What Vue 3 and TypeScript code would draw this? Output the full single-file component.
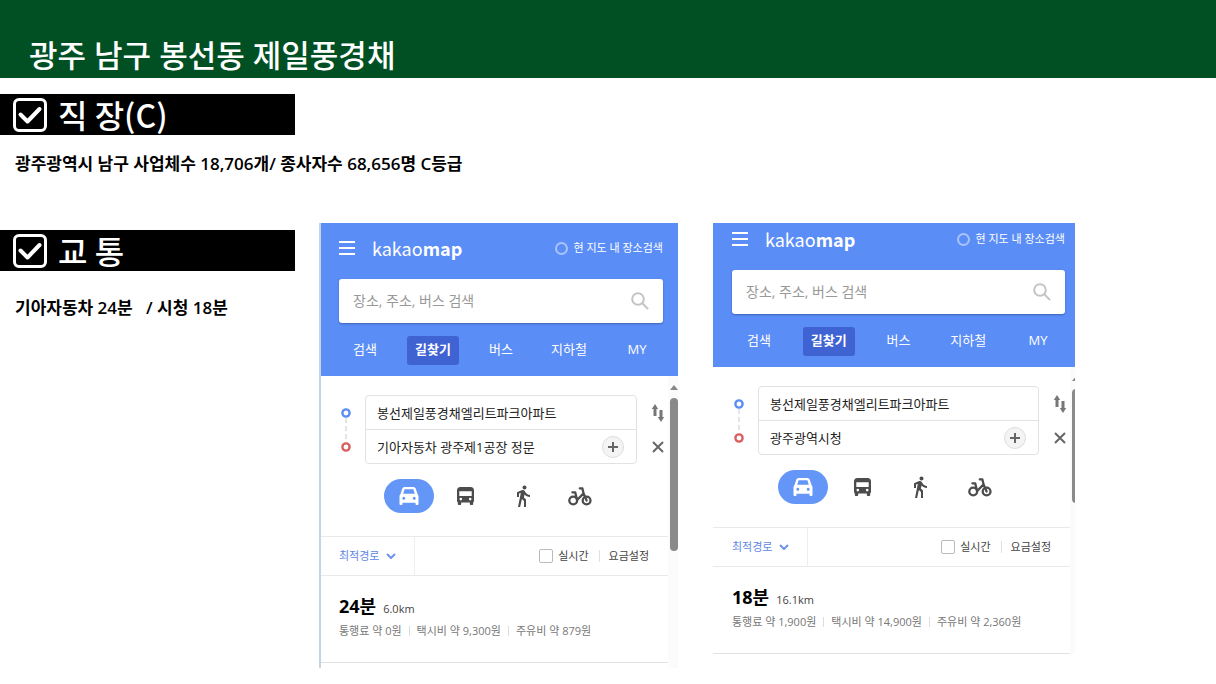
<script setup lang="ts">
import { ref } from 'vue'

interface Route {
  id: string
  from: string
  to: string
  minutes: string
  distance: string
  costs: string[]
}

const workplaceNote = '광주광역시 남구 사업체수 18,706개/ 종사자수 68,656명 C등급'
const trafficNote = '기아자동차 24분   / 시청 18분'

const routes: Route[] = [
  {
    id: 'kia',
    from: '봉선제일풍경채엘리트파크아파트',
    to: '기아자동차 광주제1공장 정문',
    minutes: '24분',
    distance: '6.0km',
    costs: ['통행료 약 0원', '택시비 약 9,300원', '주유비 약 879원'],
  },
  {
    id: 'cityhall',
    from: '봉선제일풍경채엘리트파크아파트',
    to: '광주광역시청',
    minutes: '18분',
    distance: '16.1km',
    costs: ['통행료 약 1,900원', '택시비 약 14,900원', '주유비 약 2,360원'],
  },
]

const tabs = ['검색', '길찾기', '버스', '지하철', 'MY']
const activeTab = ref<Record<string, string>>({ kia: '길찾기', cityhall: '길찾기' })

const modes = [
  { key: 'car', label: '자동차' },
  { key: 'bus', label: '대중교통' },
  { key: 'walk', label: '도보' },
  { key: 'bike', label: '자전거' },
]
const activeMode = ref<Record<string, string>>({ kia: 'car', cityhall: 'car' })
</script>

<template>
  <div class="slide">
    <header class="title-bar">
      <h1>광주 남구 봉선동 제일풍경채</h1>
    </header>

    <main>
      <section class="workplace">
        <h2 class="banner">
          <svg class="tick" viewBox="0 0 34 34" aria-hidden="true">
            <rect x="1.5" y="1.5" width="31" height="31" rx="4.5" />
            <path d="M7.500 16.500l7 7L26.500 11" />
          </svg>
          <span>직 장(C)</span>
        </h2>
        <p class="note">{{ workplaceNote }}</p>
      </section>

      <div class="board">
        <section class="traffic">
          <h2 class="banner">
            <svg class="tick" viewBox="0 0 34 34" aria-hidden="true">
              <rect x="1.5" y="1.5" width="31" height="31" rx="4.5" />
              <path d="M7.500 16.500l7 7L26.500 11" />
            </svg>
            <span>교 통</span>
          </h2>
          <p class="note">{{ trafficNote }}</p>
        </section>

        <article v-for="route in routes" :key="route.id" class="panel" :class="route.id">
          <div class="head">
            <div class="brand-row">
              <button class="menu" type="button" aria-label="메뉴">
                <svg viewBox="0 0 16 14"><path d="M0 1h16M0 7h16M0 13h16" /></svg>
              </button>
              <a class="brand" href="#">kakao<b>map</b></a>
              <label class="within">
                <input type="checkbox" />
                <span>현 지도 내 장소검색</span>
              </label>
            </div>
            <form class="search" @submit.prevent>
              <input type="text" placeholder="장소, 주소, 버스 검색" aria-label="장소, 주소, 버스 검색" />
              <button type="submit" aria-label="검색">
                <svg viewBox="0 0 18 18"><circle cx="7" cy="7" r="5.8" /><path d="M11.300 11.300l5.800 5.800" /></svg>
              </button>
            </form>
            <nav class="tabs">
              <button
                v-for="tab in tabs"
                :key="tab"
                type="button"
                :class="{ active: activeTab[route.id] === tab }"
                @click="activeTab[route.id] = tab"
              >
                <span>{{ tab }}</span>
              </button>
            </nav>
          </div>

          <div class="body">
            <div class="content">
              <div class="trip">
                <svg class="dots" viewBox="0 0 10 44" aria-hidden="true">
                  <path class="link" d="M5 10v24" />
                  <circle class="start" cx="5" cy="5" r="3.6" />
                  <circle class="end" cx="5" cy="39" r="3.6" />
                </svg>
                <div class="fields">
                  <div class="field">
                    <input type="text" :value="route.from" aria-label="출발지" />
                  </div>
                  <div class="field">
                    <input type="text" :value="route.to" aria-label="도착지" />
                    <button class="add" type="button" aria-label="경유지 추가">
                      <svg viewBox="0 0 10 10"><path d="M5 0v10M0 5h10" /></svg>
                    </button>
                  </div>
                </div>
                <div class="actions">
                  <button type="button" aria-label="출발지 도착지 바꾸기">
                    <svg class="swap" viewBox="0 0 12 18">
                      <path class="line" d="M3 12V3.500M9 6v8.500" />
                      <path class="tip" d="M3 0L6.200 5H-.2zM9 18l-3.200-5h6.400z" />
                    </svg>
                  </button>
                  <button type="button" aria-label="지우기">
                    <svg class="close" viewBox="0 0 12 12"><path d="M1 1l10 10M11 1L1 11" /></svg>
                  </button>
                </div>
              </div>

              <div class="modes">
                <button
                  v-for="mode in modes"
                  :key="mode.key"
                  type="button"
                  :aria-label="mode.label"
                  :class="{ active: activeMode[route.id] === mode.key }"
                  @click="activeMode[route.id] = mode.key"
                >
                  <svg v-if="mode.key === 'car'" class="car" viewBox="0 0 20 18">
                    <path
                      fill-rule="evenodd"
                      d="M5.500 0h9q1.700 0 2.200 1.500L18.500 7q1 1 1 2.300V17q0 1-1 1h-1q-1 0-1-1v-1.300h-13V17q0 1-1 1h-1q-1 0-1-1V9.300Q.5 8 1.500 7L3.300 1.500Q3.800 0 5.500 0zM5.600 2.200L4.200 6.800h11.600l-1.400-4.600zM4.800 9.700a1.500 1.500 0 1 0 0 3 1.500 1.500 0 0 0 0-3zM15.200 9.700a1.500 1.500 0 1 0 0 3 1.500 1.500 0 0 0 0-3z"
                    />
                  </svg>
                  <svg v-else-if="mode.key === 'bus'" class="bus" viewBox="0 0 17 18">
                    <path
                      fill-rule="evenodd"
                      d="M3.500 0h10Q17 0 17 3.500V14q0 .8-.8 1.200V17q0 1-1 1h-1.400q-1 0-1-1v-1.500H4.200V17q0 1-1 1H1.800q-1 0-1-1v-1.800Q0 14.800 0 14V3.500Q0 0 3.500 0zM2.300 4.300V9h12.400V4.300zM3.800 10.800a1.300 1.300 0 1 0 0 2.600 1.300 1.300 0 0 0 0-2.600zM13.200 10.800a1.300 1.300 0 1 0 0 2.600 1.300 1.300 0 0 0 0-2.600z"
                    />
                  </svg>
                  <svg v-else-if="mode.key === 'walk'" class="walk" viewBox="5 1 15 22">
                    <path
                      d="M13.500 5.500c1.100 0 2-.9 2-2s-.9-2-2-2-2 .9-2 2 .9 2 2 2zM9.800 8.900L7 23h2.100l1.800-8 2.100 2v6h2v-7.500l-2.100-2 .6-3C14.800 12 16.800 13 19 13v-2c-1.900 0-3.500-1-4.300-2.400l-1-1.600c-.4-.6-1-1-1.700-1-.3 0-.5.1-.8.1L6 8.300V13h2V9.600l1.800-.7"
                    />
                  </svg>
                  <svg v-else class="bike" viewBox="0 0 24 19">
                    <g class="stroke">
                      <circle cx="5.200" cy="13.500" r="3.900" />
                      <circle cx="18.600" cy="13.500" r="3.900" />
                      <path d="M4.400 5.300h2.800l1.900 7.700 6.500-6.600M11.800 1.400h2.600l1.200 5 3 7.100" />
                    </g>
                  </svg>
                </button>
              </div>

              <div class="filter">
                <label class="sort">
                  <select aria-label="경로 정렬">
                    <option>최적경로</option>
                  </select>
                  <svg viewBox="0 0 10 6"><path d="M1 1l4 4 4-4" /></svg>
                </label>
                <div class="options">
                  <label><input type="checkbox" /><span>실시간</span></label>
                  <i class="bar"></i>
                  <button type="button">요금설정</button>
                </div>
              </div>

              <div class="result">
                <div class="time">
                  <strong>{{ route.minutes }}</strong>
                  <span>{{ route.distance }}</span>
                </div>
                <ul>
                  <li v-for="cost in route.costs" :key="cost">{{ cost }}</li>
                </ul>
              </div>
            </div>
            <div class="rail" aria-hidden="true">
              <div class="up"></div>
              <div class="thumb"></div>
            </div>
          </div>
        </article>
      </div>
    </main>
  </div>
</template>

<style>
body {
  margin: 0;
  background: #fff;
}
</style>

<style scoped>
.slide,
.slide * {
  box-sizing: border-box;
}
.slide {
  --banner: 24.3vw;
  min-height: 100vh;
  overflow: hidden;
  background: #fff;
  color: #000;
  font-family: 'Open Sans', 'Noto Sans CJK KR', sans-serif;
}
button,
input,
select {
  margin: 0;
  padding: 0;
  border: 0;
  background: none;
  color: inherit;
  font: inherit;
}
button {
  cursor: pointer;
}
svg {
  display: block;
}
h1,
h2,
p,
ul {
  margin: 0;
  padding: 0;
}
.title-bar {
  padding: 33px 29px 0;
  height: 78px;
  background: #005023;
}
h1 {
  color: #fff;
  font-size: 31px;
  font-weight: 500;
  line-height: 44px;
}
.workplace {
  padding-top: 16px;
}
.banner {
  display: flex;
  align-items: center;
  gap: 11px;
  width: var(--banner);
  height: 41px;
  padding-left: 13px;
  background: #000;
  color: #fff;
  font-family: 'Noto Sans CJK KR', sans-serif;
  font-size: 32px;
  font-weight: 500;
  line-height: 41px;
  white-space: nowrap;
}
.tick {
  flex: none;
  width: 34px;
  height: 34px;
  fill: none;
  stroke: #fff;
  stroke-width: 3;
  stroke-linecap: round;
  stroke-linejoin: round;
}
.tick path {
  stroke-width: 4;
}
.note {
  padding: 17px 0 0 15px;
  font-size: 17px;
  font-weight: 600;
  line-height: 24px;
  white-space: pre;
}
.board {
  display: grid;
  grid-template-columns: 319fr 359fr 35fr 362fr 141fr;
  align-items: start;
  margin-top: 47px;
}
.traffic {
  padding-top: 7px;
}
.traffic .note {
  padding-top: 25px;
}
.panel {
  --inset: 18px;
  --inset-right: 15px;
  --crop: 9px;
  --rail: 10px;
  --thumb: 153px;
  min-width: 0;
  border-left: 2px solid #c3d5e2;
}
.panel.cityhall {
  --inset: 19px;
  --inset-right: 10px;
  --crop: 0px;
  --rail: 5px;
  --thumb: 114px;
  grid-column: 4;
  border-left: 0;
}
.head {
  padding: var(--crop) var(--inset-right) 11px var(--inset);
  background: #5b8df6;
  color: #fff;
}
.brand-row {
  display: flex;
  align-items: center;
  height: 32px;
}
.menu svg {
  width: 16px;
  height: 14px;
  stroke: #fff;
  stroke-width: 2;
}
.brand {
  margin-left: 17px;
  color: #fff;
  font-family: 'Noto Sans CJK KR', sans-serif;
  font-size: 18px;
  font-weight: 400;
  line-height: 32px;
  text-decoration: none;
}
.brand b {
  font-weight: 700;
}
.within {
  display: flex;
  align-items: center;
  gap: 5px;
  margin-left: auto;
  font-size: 11px;
  line-height: 16px;
  white-space: nowrap;
}
.within input {
  width: 13px;
  height: 13px;
  border: 2px solid #a9c4fb;
  border-radius: 50%;
  appearance: none;
}
.search {
  display: flex;
  align-items: center;
  height: 44px;
  margin-top: 15px;
  padding: 0 14px;
  border-radius: 3px;
  background: #fff;
  box-shadow: 0 1px 2px #3c65b8;
}
.search input {
  flex: 1;
  min-width: 0;
  color: #333;
  font-size: 14px;
  line-height: 20px;
  outline: 0;
}
.search input::placeholder {
  color: #999;
  opacity: 1;
}
.search svg {
  width: 18px;
  height: 18px;
  fill: none;
  stroke: #c4c4c4;
  stroke-width: 2;
}
.tabs {
  display: grid;
  grid-template-columns: repeat(5, 1fr);
  margin: 13px -8px 0;
}
.tabs button {
  justify-self: center;
  height: 29px;
  padding: 0 8px 4px;
  border-radius: 3px;
  font-size: 13px;
  line-height: 24px;
  white-space: nowrap;
}
.tabs .active {
  background: #3f63d2;
  font-weight: 700;
}
.body {
  display: flex;
}
.content {
  flex: 1;
  min-width: 0;
  padding-top: 19px;
}
.trip {
  display: grid;
  grid-template-columns: calc(var(--inset) + 26px) 1fr 31px;
  align-items: center;
}
.dots {
  justify-self: center;
  width: 10px;
  height: 44px;
  margin-left: 6px;
  fill: none;
  stroke-width: 2.4;
}
.dots .link {
  stroke: #c6cbd2;
  stroke-width: 1;
  stroke-dasharray: 5 3;
}
.dots .start {
  stroke: #5b8df6;
}
.dots .end {
  stroke: #d95f5f;
}
.fields {
  min-width: 0;
  border: 1px solid #e2e2e2;
  border-radius: 4px;
}
.field {
  display: flex;
  align-items: center;
  height: 33px;
  padding: 0 12px 0 11px;
}
.field + .field {
  height: 34px;
  border-top: 1px solid #e2e2e2;
}
.field input {
  flex: 1;
  min-width: 0;
  color: #222;
  font-size: 13px;
  line-height: 20px;
  outline: 0;
}
.add {
  display: grid;
  place-items: center;
  width: 22px;
  height: 22px;
  border: 1px solid #dedede;
  border-radius: 50%;
  background: #f4f4f4;
}
.add svg {
  width: 10px;
  height: 10px;
  stroke: #666;
  stroke-width: 2;
}
.actions {
  display: grid;
  grid-template-rows: 34px 34px;
  padding-left: 11px;
}
.actions button {
  display: grid;
  place-items: center;
}
.swap {
  width: 12px;
  height: 18px;
  overflow: visible;
}
.swap .line {
  stroke: #777;
  stroke-width: 3;
}
.swap .tip {
  fill: #777;
}
.close {
  width: 12px;
  height: 12px;
  stroke: #666;
  stroke-width: 2;
}
.modes {
  display: grid;
  grid-template-columns: repeat(4, 1fr);
  width: 66%;
  margin: 15px auto 23px;
}
.modes button {
  display: grid;
  place-items: center;
  justify-self: center;
  width: 50px;
  height: 34px;
  border-radius: 17px;
}
.modes .active {
  background: #6396f7;
}
.modes svg {
  fill: #4c4c4c;
}
.modes .active svg {
  fill: #fff;
}
.car {
  width: 20px;
  height: 18px;
}
.bus {
  width: 17px;
  height: 18px;
}
.walk {
  width: 15px;
  height: 22px;
}
.bike {
  width: 24px;
  height: 19px;
}
.bike .stroke {
  fill: none;
  stroke: #4c4c4c;
  stroke-width: 2.3;
  stroke-linecap: round;
  stroke-linejoin: round;
}
.filter {
  display: flex;
  height: 40px;
  border-top: 1px solid #e9e9e9;
  border-bottom: 1px solid #e9e9e9;
  color: #444;
  font-size: 11px;
  line-height: 16px;
}
.sort {
  display: flex;
  align-items: center;
  gap: 6px;
  padding: 0 18px 0 var(--inset);
  border-right: 1px solid #eee;
  color: #5e86e6;
}
.sort select {
  appearance: none;
  outline: 0;
}
.sort svg {
  width: 10px;
  height: 6px;
  fill: none;
  stroke: #6f93ea;
  stroke-width: 2;
}
.options {
  display: flex;
  align-items: center;
  margin-left: auto;
  padding-right: 19px;
}
.options label {
  display: flex;
  align-items: center;
  gap: 5px;
}
.options input {
  width: 14px;
  height: 14px;
  border: 1px solid #bbb;
  border-radius: 2px;
  background: #fff;
  appearance: none;
}
.bar {
  width: 1px;
  height: 12px;
  margin: 0 9px 0 10px;
  background: #e0e0e0;
}
.result {
  padding: 17px 0 20px var(--inset);
  border-bottom: 1px solid #e2e2e2;
}
.time {
  display: flex;
  align-items: baseline;
  gap: 7px;
  height: 26px;
  line-height: 26px;
}
.time strong {
  font-size: 18px;
  font-weight: 700;
}
.time span {
  color: #444;
  font-size: 11px;
}
ul {
  display: flex;
  height: 23px;
  color: #777;
  font-size: 11px;
  line-height: 23px;
  list-style: none;
  white-space: nowrap;
}
li {
  display: flex;
  align-items: center;
}
li + li::before {
  content: '';
  width: 1px;
  height: 10px;
  margin: 0 7px;
  background: #ddd;
}
.rail {
  flex: none;
  width: var(--rail);
  padding: 9px 0 0 2px;
  overflow: hidden;
  background: #fbfbfb;
}
.kia .body {
  min-height: 292px;
}
.up {
  width: 8px;
  height: 5px;
  margin-bottom: 8px;
  background: #888;
  clip-path: polygon(50% 0, 100% 100%, 0 100%);
}
.thumb {
  width: 8px;
  height: var(--thumb);
  border-radius: 4px;
  background: #8a8a8a;
}
</style>
